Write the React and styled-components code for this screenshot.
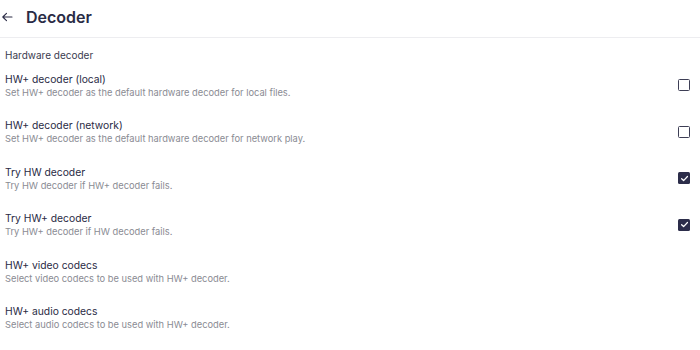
import React from "react";
import styled, { createGlobalStyle } from "styled-components";

const GlobalStyle = createGlobalStyle`
  body {
    margin: 0;
    background: #ffffff;
    font-family: Inter, "Noto Sans", sans-serif;
  }
`;

const settings = [
  {
    title: "HW+ decoder (local)",
    desc: "Set HW+ decoder as the default hardware decoder for local files.",
    checked: false,
  },
  {
    title: "HW+ decoder (network)",
    desc: "Set HW+ decoder as the default hardware decoder for network play.",
    checked: false,
  },
  {
    title: "Try HW decoder",
    desc: "Try HW decoder if HW+ decoder fails.",
    checked: true,
  },
  {
    title: "Try HW+ decoder",
    desc: "Try HW+ decoder if HW decoder fails.",
    checked: true,
  },
  {
    title: "HW+ video codecs",
    desc: "Select video codecs to be used with HW+ decoder.",
  },
  {
    title: "HW+ audio codecs",
    desc: "Select audio codecs to be used with HW+ decoder.",
  },
];

const Check = ({ checked }) => (
  <CheckBox $checked={checked}>
    {checked && (
      <svg width="9" height="9" viewBox="0 0 10 10">
        <path
          d="M1.8 5.2 L4 7.3 L8.3 2.8"
          fill="none"
          stroke="#ffffff"
          strokeWidth="1.4"
          strokeLinecap="round"
          strokeLinejoin="round"
        />
      </svg>
    )}
  </CheckBox>
);

const App = () => {
  return (
    <Page>
      <GlobalStyle />
      <Header>
        <BackButton>
          <svg width="12" height="12" viewBox="0 0 12 12">
            <path
              d="M11 6 H1.8 M5.5 2.3 L1.8 6 L5.5 9.7"
              fill="none"
              stroke="#2a2b45"
              strokeWidth="1.1"
              strokeLinecap="round"
              strokeLinejoin="round"
            />
          </svg>
        </BackButton>
        <Title>Decoder</Title>
      </Header>
      <SectionLabel>Hardware decoder</SectionLabel>
      {settings.map((item) => (
        <Row key={item.title}>
          <Texts>
            <RowTitle>{item.title}</RowTitle>
            <RowDesc>{item.desc}</RowDesc>
          </Texts>
          {item.checked !== undefined && <Check checked={item.checked} />}
        </Row>
      ))}
    </Page>
  );
};

const Page = styled.div`
  width: 700px;
  height: 350px;
  overflow: hidden;
  background: #ffffff;
`;

const Header = styled.header`
  height: 38px;
  padding-bottom: 4px;
  box-sizing: border-box;
  display: flex;
  align-items: center;
  border-bottom: 1px solid #ededf0;
`;

const BackButton = styled.div`
  width: 26px;
  display: flex;
  justify-content: flex-start;
  padding-left: 1px;
  box-sizing: border-box;
  margin-top: 1px;
`;

const Title = styled.h1`
  margin: 0;
  font-size: 16px;
  font-weight: 600;
  color: #2a2b45;
`;

const SectionLabel = styled.div`
  padding: 11px 5px 1px;
  font-size: 10px;
  line-height: 12px;
  color: #3a3b4f;
`;

const Row = styled.div`
  height: 46.5px;
  display: flex;
  align-items: center;
  justify-content: space-between;
  padding: 0 10px 0 5px;
`;

const Texts = styled.div`
  display: flex;
  flex-direction: column;
`;

const RowTitle = styled.div`
  font-size: 10.3px;
  line-height: 14px;
  color: #2a2b45;
`;

const RowDesc = styled.div`
  font-size: 9.3px;
  line-height: 13px;
  color: #8a8b93;
`;

const CheckBox = styled.div`
  width: 12px;
  height: 12px;
  box-sizing: border-box;
  border-radius: 1.5px;
  border: ${(p) => (p.$checked ? "none" : "1.5px solid #3d3e55")};
  background: ${(p) => (p.$checked ? "#2c2d4a" : "transparent")};
  display: flex;
  align-items: center;
  justify-content: center;
`;

export default App;
